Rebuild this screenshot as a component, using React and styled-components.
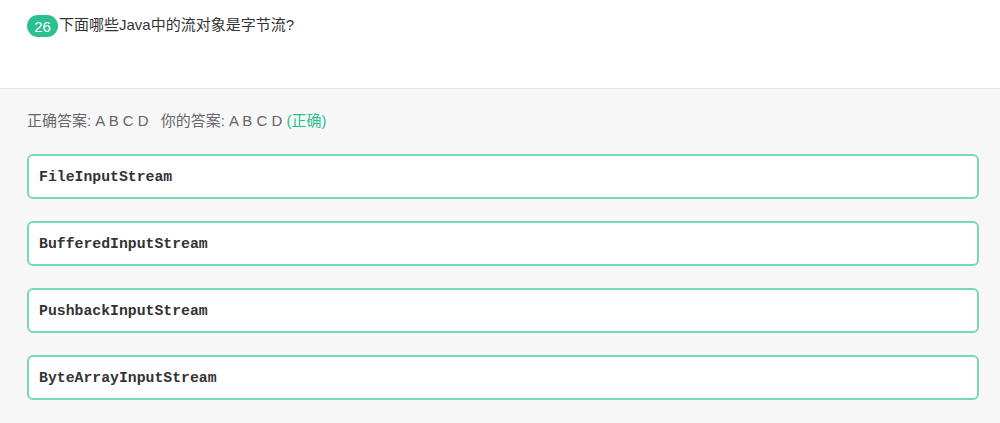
import React from "react";
import styled, { createGlobalStyle } from "styled-components";

const GlobalStyle = createGlobalStyle`
  html, body {
    margin: 0;
    padding: 0;
    background: #f7f7f7;
  }
  body {
    font-family: "Helvetica Neue", "Liberation Sans", "Noto Sans CJK SC", sans-serif;
  }
`;

const Page = styled.div`
  width: 1000px;
  height: 423px;
  overflow: hidden;
  background: #f7f7f7;
`;

const Question = styled.div`
  height: 89px;
  background: #fff;
  border-bottom: 1px solid #e8e8e8;
  padding: 15px 27px 0;
  box-sizing: border-box;
  display: flex;
  align-items: flex-start;
`;

const Badge = styled.span`
  display: inline-flex;
  align-items: center;
  justify-content: center;
  width: 31px;
  height: 22px;
  border-radius: 11px;
  background: #2bbf92;
  color: #fff;
  font-size: 15px;
  font-family: "Liberation Sans", Arial, sans-serif;
`;

const Title = styled.span`
  margin-left: 1px;
  font-size: 15px;
  line-height: 20px;
  color: #333;
  font-family: "Liberation Sans", "Noto Sans CJK SC", sans-serif;
`;

const Body = styled.div`
  padding: 22px 0 0 27px;
  width: 979px;
  box-sizing: border-box;
`;

const Answer = styled.div`
  font-size: 15px;
  line-height: 20px;
  color: #666;
  font-family: "Liberation Sans", "Noto Sans CJK SC", sans-serif;
  margin-bottom: 23px;
`;

const Gap = styled.span`
  display: inline-block;
  width: ${(p) => p.w}px;
`;

const Correct = styled.span`
  color: #2bbf92;
`;

const Options = styled.div`
  display: flex;
  flex-direction: column;
  gap: 22px;
`;

const Option = styled.div`
  height: 45px;
  box-sizing: border-box;
  border: 2px solid #76d9bd;
  border-radius: 6px;
  background: #fff;
  display: flex;
  align-items: center;
  padding-left: 10px;
  font-family: "Liberation Mono", "Courier New", monospace;
  font-weight: bold;
  font-size: 14.8px;
  color: #333;
`;

const options = [
  "FileInputStream",
  "BufferedInputStream",
  "PushbackInputStream",
  "ByteArrayInputStream",
];

export default function App() {
  return (
    <Page>
      <GlobalStyle />
      <Question>
        <Badge>26</Badge>
        <Title>下面哪些Java中的流对象是字节流?</Title>
      </Question>
      <Body>
        <Answer>
          正确答案: A B C D<Gap w={12} />你的答案: A B C D <Correct>(正确)</Correct>
        </Answer>
        <Options>
          {options.map((o) => (
            <Option key={o}>{o}</Option>
          ))}
        </Options>
      </Body>
    </Page>
  );
}
